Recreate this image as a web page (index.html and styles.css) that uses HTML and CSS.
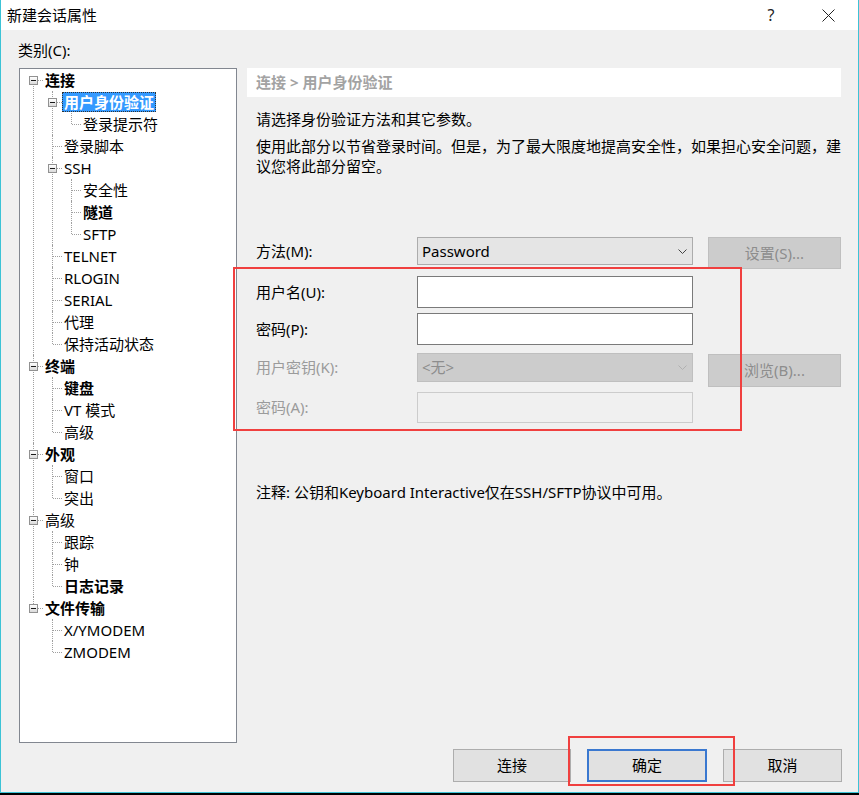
FILE: index.html
```html
<!DOCTYPE html>
<html lang="zh-CN">
<head>
<meta charset="utf-8">
<title>新建会话属性</title>
<link rel="stylesheet" href="styles.css">
</head>
<body>
<div class="window">
  <div class="titlebar">
    <span class="title">新建会话属性</span>
    <span class="help">?</span>
    <svg class="close" width="13" height="13" viewBox="0 0 13 13"><path d="M0.5 0.5 L12.5 12.5 M12.5 0.5 L0.5 12.5" stroke="#222" stroke-width="1" fill="none"/></svg>
  </div>
  <div class="main">
    <div class="top">
      <div class="cat-label">类别(C):</div>
      <div class="tree">
        <ul>
          <li><div class="node b"><span class="exp"></span>连接</div>
            <ul>
              <li><div class="node b"><span class="exp"></span><span class="sel">用户身份验证</span></div>
                <ul>
                  <li><div class="node">登录提示符</div></li>
                </ul>
              </li>
              <li><div class="node">登录脚本</div></li>
              <li><div class="node"><span class="exp"></span>SSH</div>
                <ul>
                  <li><div class="node">安全性</div></li>
                  <li><div class="node b">隧道</div></li>
                  <li><div class="node">SFTP</div></li>
                </ul>
              </li>
              <li><div class="node">TELNET</div></li>
              <li><div class="node">RLOGIN</div></li>
              <li><div class="node">SERIAL</div></li>
              <li><div class="node">代理</div></li>
              <li><div class="node">保持活动状态</div></li>
            </ul>
          </li>
          <li><div class="node b"><span class="exp"></span>终端</div>
            <ul>
              <li><div class="node b">键盘</div></li>
              <li><div class="node">VT 模式</div></li>
              <li><div class="node">高级</div></li>
            </ul>
          </li>
          <li><div class="node b"><span class="exp"></span>外观</div>
            <ul>
              <li><div class="node">窗口</div></li>
              <li><div class="node">突出</div></li>
            </ul>
          </li>
          <li><div class="node"><span class="exp"></span>高级</div>
            <ul>
              <li><div class="node">跟踪</div></li>
              <li><div class="node">钟</div></li>
              <li><div class="node b">日志记录</div></li>
            </ul>
          </li>
          <li><div class="node b"><span class="exp"></span>文件传输</div>
            <ul>
              <li><div class="node">X/YMODEM</div></li>
              <li><div class="node">ZMODEM</div></li>
            </ul>
          </li>
        </ul>
      </div>
      <div class="panel">
        <div class="crumb">连接 &gt; 用户身份验证</div>
        <p class="p1">请选择身份验证方法和其它参数。</p>
        <p class="p2">使用此部分以节省登录时间。但是，为了最大限度地提高安全性，如果担心安全问题，建<br>议您将此部分留空。</p>
        <div class="form">
          <div class="frow r1">
            <div class="flabel h28">方法(M):</div>
            <div class="ctrl select h28"><span>Password</span><svg width="9" height="5" viewBox="0 0 9 5"><polyline points="0.5,0.5 4.5,4.5 8.5,0.5" fill="none" stroke="#444" stroke-width="1"/></svg></div>
            <div class="sbtn h32">设置(S)...</div>
          </div>
          <div class="frow r2">
            <div class="flabel h32">用户名(U):</div>
            <div class="ctrl input h32"></div>
          </div>
          <div class="frow r3">
            <div class="flabel h32">密码(P):</div>
            <div class="ctrl input h32"></div>
          </div>
          <div class="frow r4">
            <div class="flabel dis h29">用户密钥(K):</div>
            <div class="ctrl select dsel h29"><span>&lt;无&gt;</span><svg width="9" height="5" viewBox="0 0 9 5"><polyline points="0.5,0.5 4.5,4.5 8.5,0.5" fill="none" stroke="#b0b0b0" stroke-width="1"/></svg></div>
            <div class="sbtn h33 off1">浏览(B)...</div>
          </div>
          <div class="frow r5">
            <div class="flabel dis h31">密码(A):</div>
            <div class="ctrl input dinput h31"></div>
          </div>
        </div>
        <p class="note">注释: 公钥和Keyboard Interactive仅在SSH/SFTP协议中可用。</p>
      </div>
    </div>
    <div class="footer">
      <div class="btn w118">连接</div>
      <div class="btn w120 default">确定</div>
      <div class="btn w119">取消</div>
    </div>
  </div>
  <div class="anno anno1"></div>
  <div class="anno anno2"></div>
</div>
</body>
</html>
```
FILE: styles.css
```css
html, body {
  margin: 0;
  padding: 0;
}
body {
  width: 859px;
  height: 795px;
  overflow: hidden;
  background: #000;
  font-family: "Noto Sans", "Noto Sans CJK SC", sans-serif;
  font-size: 15px;
  color: #000;
}
.window {
  position: relative;
  height: 792px;
  display: flex;
  flex-direction: column;
  border: 1px solid #3cc3d6;
  border-top: 0;
  background: #f0f0f0;
}
.titlebar {
  height: 30px;
  background: #fff;
  display: flex;
  align-items: center;
  padding-left: 6px;
  padding-right: 23px;
}
.title {
  flex: 1;
  font-size: 15px;
  line-height: 30px;
}
.help {
  width: 10px;
  text-align: center;
  font-size: 16px;
  color: #222;
  margin-right: 46px;
}
.close {
  display: block;
}
.main {
  flex: 1;
  display: flex;
  flex-direction: column;
  padding: 10px 16px 10px 18px;
}
.top {
  display: grid;
  grid-template-columns: 218px 594px;
  grid-template-rows: 28px 675px;
  column-gap: 10px;
}
.cat-label {
  grid-column: 1;
  grid-row: 1;
  line-height: 20px;
  margin-left: -1px;
}
.tree {
  grid-column: 1;
  grid-row: 2;
  background: #fff;
  border: 1px solid #828790;
  box-sizing: border-box;
  overflow: hidden;
}
.tree ul {
  list-style: none;
  margin: 0;
  padding: 0;
}
.tree ul ul {
  margin-left: 19px;
}
.tree li {
  position: relative;
}
.tree li::before {
  content: "";
  position: absolute;
  left: 13px;
  top: 0;
  bottom: 0;
  border-left: 1px dotted #a0a0a0;
}
.tree li:last-child::before {
  bottom: auto;
  height: 11px;
}
.tree > ul > li:first-child::before {
  top: 11px;
}
.node {
  position: relative;
  height: 22px;
  line-height: 22px;
  padding-left: 25px;
  white-space: nowrap;
}
.node::before {
  content: "";
  position: absolute;
  left: 14px;
  top: 11px;
  width: 9px;
  border-top: 1px dotted #a0a0a0;
}
.node.b {
  font-weight: bold;
}
.exp {
  position: absolute;
  left: 9px;
  top: 7px;
  width: 9px;
  height: 9px;
  box-sizing: border-box;
  border: 1px solid #919191;
  background: linear-gradient(#ffffff, #dadada);
  z-index: 1;
}
.exp::after {
  content: "";
  position: absolute;
  left: 1px;
  top: 3px;
  width: 5px;
  height: 1px;
  background: #1a1a1a;
}
.sel {
  display: inline-block;
  vertical-align: top;
  margin-top: 1px;
  margin-left: -2px;
  padding: 0 2px;
  height: 20px;
  line-height: 20px;
  background: #3399ff;
  color: #fff;
  outline: 1px dotted #333;
  outline-offset: -1px;
}
.panel {
  grid-column: 2;
  grid-row: 2;
}
.crumb {
  height: 29px;
  line-height: 29px;
  background: #fff;
  padding-left: 9px;
  color: #a3a3a3;
  font-weight: bold;
}
.p1, .p2, .note {
  margin: 0 0 0 9px;
  line-height: 20px;
  white-space: nowrap;
}
.p1 {
  margin-top: 12px;
}
.p2 {
  margin-top: 7px;
}
.form {
  margin: 61px 0 0 9px;
}
.frow {
  display: flex;
  align-items: flex-start;
}
.r2 { margin-top: 7px; }
.r3 { margin-top: 5px; }
.r4 { margin-top: 8px; }
.r5 { margin-top: 5px; }
.flabel {
  width: 161px;
}
.flabel.dis {
  color: #9b9b9b;
}
.h28 { height: 28px; line-height: 26px; }
.h29 { height: 29px; line-height: 27px; }
.h31 { height: 31px; }
.h32 { height: 32px; line-height: 30px; }
.h33 { height: 33px; line-height: 31px; }
.flabel.h28 { line-height: 28px; }
.flabel.h29 { line-height: 29px; }
.flabel.h31 { line-height: 31px; }
.flabel.h32 { line-height: 32px; }
.ctrl {
  width: 276px;
  box-sizing: border-box;
}
.select {
  display: flex;
  align-items: center;
  justify-content: space-between;
  padding: 0 5px 0 4px;
  border: 1px solid #acacac;
  background: #e5e5e5;
}
.select.dsel {
  border-color: #bfbfbf;
  background: #cccccc;
  color: #8d8d8d;
}
.input {
  border: 1px solid #7a7a7a;
  background: #fff;
}
.input.dinput {
  border-color: #cccccc;
  background: #f0f0f0;
}
.sbtn {
  margin-left: 15px;
  width: 133px;
  box-sizing: border-box;
  border: 1px solid #bfbfbf;
  background: #cccccc;
  color: #8d8d8d;
  text-align: center;
}
.sbtn.off1 {
  margin-top: 1px;
}
.note {
  margin-top: 59px;
}
.footer {
  display: flex;
  justify-content: flex-end;
  gap: 16px;
  margin-top: 6px;
}
.btn {
  height: 33px;
  box-sizing: border-box;
  border: 1px solid #adadad;
  background: #e1e1e1;
  text-align: center;
  line-height: 31px;
}
.btn.default {
  border: 2px solid #3a78d0;
  line-height: 29px;
}
.w118 { width: 118px; }
.w119 { width: 119px; }
.w120 { width: 120px; }
.anno {
  position: absolute;
  box-sizing: border-box;
  border: 2px solid #f0403f;
  pointer-events: none;
}
.anno1 {
  left: 232px;
  top: 267px;
  width: 509px;
  height: 164px;
}
.anno2 {
  left: 567px;
  top: 736px;
  width: 167px;
  height: 50px;
}
```
